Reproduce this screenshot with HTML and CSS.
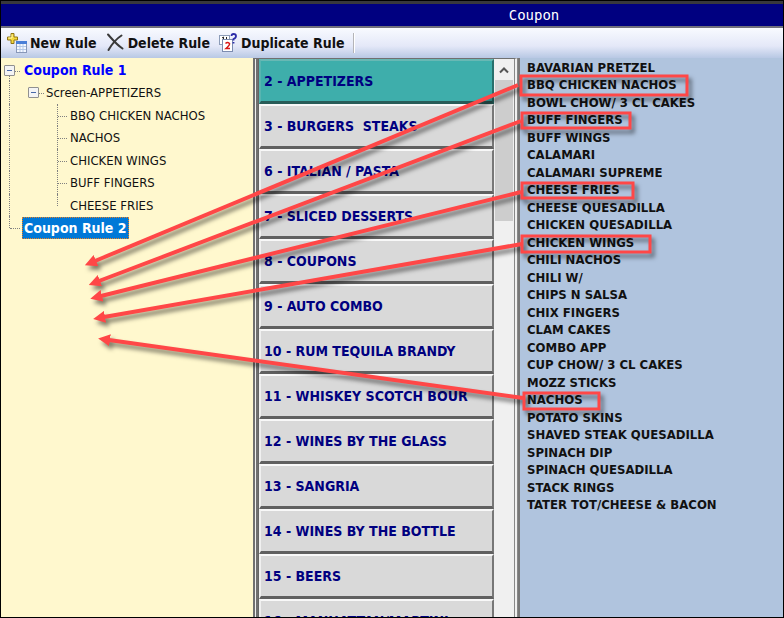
FILE: index.html
```
<!DOCTYPE html>
<html lang="en">
<head>
    <meta charset="UTF-8">
    <meta name="viewport" content="width=device-width, initial-scale=1.0">
    <title>Coupon</title>
    <link rel="stylesheet" href="styles.css">
</head>
<body>
    <div class="window">
        <header class="title-bar">Coupon</header>

        <div class="toolbar">
            <button type="button" class="tool-btn">
                <svg class="tool-icon" viewBox="0 0 20 20">
                    <path d="M4 .5h3v3.500h3.500v3H7v3.500H4V7H.5V4H4z" fill="#f4d83c" stroke="#8f7414"/>
                    <path d="M5 1.500v3.500h-3.500" fill="none" stroke="#fff8b0"/>
                    <rect x="9.500" y="8.500" width="10" height="11" fill="#f4f8ff" stroke="#8898b8"/>
                    <rect x="9" y="8" width="11" height="3" fill="#4a7fd8"/>
                    <path d="M10 13.500h9M10 16.500h9M13 11v8M16 11v8" stroke="#b4c8e8" fill="none"/>
                </svg>
                New Rule
            </button>
            <button type="button" class="tool-btn">
                <svg class="tool-icon" viewBox="0 0 20 20">
                    <path d="M3 1.500C7 6 12 12 17.500 15.500M16.500 2.500C11 6 7 11 3.500 17" fill="none" stroke="#3a3a3a" stroke-width="2" stroke-linecap="round"/>
                </svg>
                Delete Rule
            </button>
            <button type="button" class="tool-btn">
                <svg class="tool-icon" viewBox="0 0 20 20">
                    <rect x="1.500" y="2.500" width="10" height="9" fill="#fff" stroke="#8c9cb8"/>
                    <path d="M4 5l1.500-1v5M8.500 4v3" stroke="#222" fill="none"/>
                    <rect x="4.500" y="6.500" width="10" height="12" fill="#fff" stroke="#7c8cb0"/>
                    <path d="M7.500 10.500q2-2 4 0q.5 1.500-3.500 5h4" stroke="#d81818" stroke-width="1.500" fill="none"/>
                    <path d="M13.500 3q0-2 2-2q2.500 0 2.500 2t-2.500 3v1.500M15.500 9v1.500" stroke="#2c2ca8" stroke-width="1.800" fill="none"/>
                </svg>
                Duplicate Rule
            </button>
            <span class="separator"></span>
        </div>

        <main class="panes">
            <section class="rules">
                <ul class="tree">
                    <li class="root-row"><button type="button" class="toggle" aria-label="Collapse Coupon Rule 1"></button><span class="rule-name">Coupon Rule 1</span></li>
                    <li class="screen-row"><button type="button" class="toggle" aria-label="Collapse Screen-APPETIZERS"></button>Screen-APPETIZERS</li>
                    <li class="item-row">BBQ CHICKEN NACHOS</li>
                    <li class="item-row">NACHOS</li>
                    <li class="item-row">CHICKEN WINGS</li>
                    <li class="item-row">BUFF FINGERS</li>
                    <li class="item-row last-item">CHEESE FRIES</li>
                    <li class="root-row last-root"><span class="rule-name selected">Coupon Rule 2</span></li>
                </ul>
            </section>

            <section class="screens">
                <div class="screen-list">
                    <button type="button" class="screen-btn active">2 - APPETIZERS</button>
                    <button type="button" class="screen-btn">3 - BURGERS&nbsp; STEAKS</button>
                    <button type="button" class="screen-btn">6 - ITALIAN / PASTA</button>
                    <button type="button" class="screen-btn">7 - SLICED DESSERTS</button>
                    <button type="button" class="screen-btn">8 - COUPONS</button>
                    <button type="button" class="screen-btn">9 - AUTO COMBO</button>
                    <button type="button" class="screen-btn">10 - RUM TEQUILA BRANDY</button>
                    <button type="button" class="screen-btn">11 - WHISKEY SCOTCH BOUR</button>
                    <button type="button" class="screen-btn">12 - WINES BY THE GLASS</button>
                    <button type="button" class="screen-btn">13 - SANGRIA</button>
                    <button type="button" class="screen-btn">14 - WINES BY THE BOTTLE</button>
                    <button type="button" class="screen-btn">15 - BEERS</button>
                    <button type="button" class="screen-btn">16 - MANHATTAN/MARTINI</button>
                </div>
                <div class="scrollbar">
                    <button type="button" class="scroll-up" aria-label="Scroll up">
                        <svg class="chevron" viewBox="0 0 10 8"><path d="M1 6.500l4-4 4 4" fill="none" stroke="#555" stroke-width="2"/></svg>
                    </button>
                    <div class="thumb"></div>
                </div>
            </section>

            <section class="items">
                <ul class="item-list">
                    <li>BAVARIAN PRETZEL</li>
                    <li>BBQ CHICKEN NACHOS</li>
                    <li>BOWL CHOW/ 3 CL CAKES</li>
                    <li>BUFF FINGERS</li>
                    <li>BUFF WINGS</li>
                    <li>CALAMARI</li>
                    <li>CALAMARI SUPREME</li>
                    <li>CHEESE FRIES</li>
                    <li>CHEESE QUESADILLA</li>
                    <li>CHICKEN QUESADILLA</li>
                    <li>CHICKEN WINGS</li>
                    <li>CHILI NACHOS</li>
                    <li>CHILI W/</li>
                    <li>CHIPS N SALSA</li>
                    <li>CHIX FINGERS</li>
                    <li>CLAM CAKES</li>
                    <li>COMBO APP</li>
                    <li>CUP CHOW/ 3 CL CAKES</li>
                    <li>MOZZ STICKS</li>
                    <li>NACHOS</li>
                    <li>POTATO SKINS</li>
                    <li>SHAVED STEAK QUESADILLA</li>
                    <li>SPINACH DIP</li>
                    <li>SPINACH QUESADILLA</li>
                    <li>STACK RINGS</li>
                    <li>TATER TOT/CHEESE &amp; BACON</li>
                </ul>
            </section>
        </main>
    </div>

    <!-- red callouts drawn over the window -->
    <svg class="callouts" width="784" height="618" viewBox="0 0 784 618">
        <defs>
            <!-- the line ends at the base of the head, the tip reaches 12px further -->
            <marker id="head" viewBox="0 0 12 12" refX="1" refY="6" markerWidth="12" markerHeight="12" markerUnits="userSpaceOnUse" orient="auto">
                <path d="M0 0L12 6L0 12z" fill="#ff4747"/>
            </marker>
        </defs>
        <g fill="none" stroke="#ff4747" stroke-width="3">
            <rect x="521" y="76" width="166" height="19"/>
            <rect x="522" y="113" width="108" height="15"/>
            <rect x="522" y="183" width="111" height="15"/>
            <rect x="522" y="236" width="128" height="16"/>
            <rect x="524" y="393" width="75" height="16"/>
        </g>
        <g stroke="#ff4747" stroke-width="4" marker-end="url(#head)">
            <path d="M518 85L95 261"/>
            <path d="M521 121L99 281"/>
            <path d="M521 192L101 296"/>
            <path d="M522 244L104 317"/>
            <path d="M523 398L109 340"/>
        </g>
    </svg>
</body>
</html>
```

FILE: styles.css
```
* {
    box-sizing: border-box;
}

body {
    margin: 0;
    font-family: 'DejaVu Sans Condensed', 'DejaVu Sans', Tahoma, sans-serif;
    font-size: 13px;
    color: #111;
}

button {
    margin: 0;
    font: inherit;
    color: inherit;
    border: none;
    background: none;
}

ul {
    margin: 0;
    padding: 0;
    list-style: none;
}

.window {
    display: flex;
    flex-direction: column;
    height: 100vh;
    overflow: hidden;
    border: 1px solid #000;
    background-color: #f0f0f0;
}

.title-bar {
    flex: none;
    height: 27px;
    padding-left: 284px;
    border-top: 3px solid #38383c;
    border-bottom: 2px solid #70707c;
    background-color: #000080;
    color: #fff;
    font-family: 'DejaVu Sans Mono', monospace;
    font-size: 14px;
    line-height: 23px;
    text-align: center;
}

.toolbar {
    display: flex;
    flex: none;
    align-items: center;
    gap: 8px;
    height: 30px;
    padding-left: 6px;
    background: linear-gradient(#f8faff, #e4e8f8 60%, #b8c8e4);
}

.tool-btn {
    display: flex;
    align-items: center;
    gap: 3px;
    padding: 0;
    font-size: 14px;
    font-weight: bold;
}

.tool-icon {
    width: 20px;
    height: 20px;
}

.separator {
    width: 2px;
    height: 20px;
    border-left: 1px solid #b4b4b8;
    border-right: 1px solid #fff;
}

.panes {
    display: flex;
    flex: 1;
    min-height: 0;
}

.rules {
    width: 252px;
    padding: 1px 0 0 9px;
    background-color: #fff8ce;
}

.tree li {
    position: relative;
    display: flex;
    align-items: center;
    height: 22px;
    white-space: nowrap;
}

.tree li:nth-child(even) {
    height: 23px;
}

.root-row {
    padding-left: 12px;
}

.screen-row {
    padding-left: 36px;
}

.item-row {
    padding-left: 60px;
}

.toggle {
    position: absolute;
    left: -6px;
    z-index: 1;
    width: 11px;
    height: 11px;
    padding: 0;
    border: 1px solid #909090;
    border-radius: 1px;
    background: linear-gradient(#4868a8, #4868a8) center / 5px 1px no-repeat #f4f4f4;
}

.screen-row .toggle {
    left: 18px;
}

/* dotted connectors of the tree */
.tree li::before {
    content: "";
    position: absolute;
    top: 0;
    bottom: 0;
    left: -1px;
    border-left: 1px dotted #808080;
}

.tree li:first-child::before {
    top: 11px;
}

.tree .last-root::before {
    bottom: 11px;
}

.root-row::after,
.screen-row::after,
.item-row::after {
    content: "";
    position: absolute;
    top: 12px;
    left: 0;
    width: 10px;
    border-top: 1px dotted #808080;
}

.screen-row::after {
    left: 24px;
}

.item-row::after {
    top: 0;
    bottom: 0;
    left: 47px;
    border-left: 1px dotted #808080;
    border-top: none;
    background: repeating-linear-gradient(90deg, #808080 0 1px, transparent 1px 2px) 0 12px / 10px 1px no-repeat;
}

.last-item::after {
    bottom: 10px;
}

.rule-name {
    padding: 0 1px;
    border: 1px solid transparent;
    color: #0000ff;
    font-size: 14px;
    font-weight: bold;
    line-height: 20px;
}

.rule-name.selected {
    border: 1px dotted #e88020;
    background-color: #0078d7;
    color: #fff;
}

.screens {
    display: flex;
    width: 265px;
    border-top: 1px solid #707070;
    border-left: 5px double #707070;
    border-right: 4px double #888;
}

.screen-list {
    flex: 1;
    min-width: 0;
    border-left: 1px solid #666;
    background-color: #666;
}

.screen-btn {
    display: block;
    width: 100%;
    height: 45px;
    padding: 0 0 1px 3px;
    border-top: 2px solid #f8f8f8;
    border-left: 2px solid #f0f0f0;
    border-right: 2px solid #777;
    border-bottom: 3px solid #606060;
    background-color: #d9d9d9;
    color: #000080;
    font-size: 14px;
    font-weight: bold;
    text-align: left;
    white-space: nowrap;
}

.screen-btn.active {
    border-top-color: #68b8b4;
    border-left-color: #58b4b0;
    border-right-color: #28706c;
    border-bottom-color: #285c58;
    background-color: #3eaeab;
}

.scrollbar {
    width: 20px;
    background-color: #f0f0f0;
}

.scroll-up {
    display: flex;
    align-items: center;
    justify-content: center;
    width: 100%;
    height: 21px;
    padding: 0;
}

.chevron {
    width: 10px;
    height: 8px;
}

.thumb {
    height: 141px;
    margin: 0 1px;
    background-color: #cdcdcd;
}

.items {
    flex: 1;
    min-width: 0;
    padding: 1px 0 0 7px;
    border-left: 2px solid #777;
    background-color: #b0c4de;
    font-weight: bold;
}

.item-list li {
    height: 17px;
    line-height: 17px;
    white-space: nowrap;
}

.item-list li:nth-child(even) {
    height: 18px;
}

.callouts {
    position: absolute;
    top: 0;
    left: 0;
    pointer-events: none;
    filter: drop-shadow(3px 4px 2px rgba(0, 0, 0, 0.5));
}
```
